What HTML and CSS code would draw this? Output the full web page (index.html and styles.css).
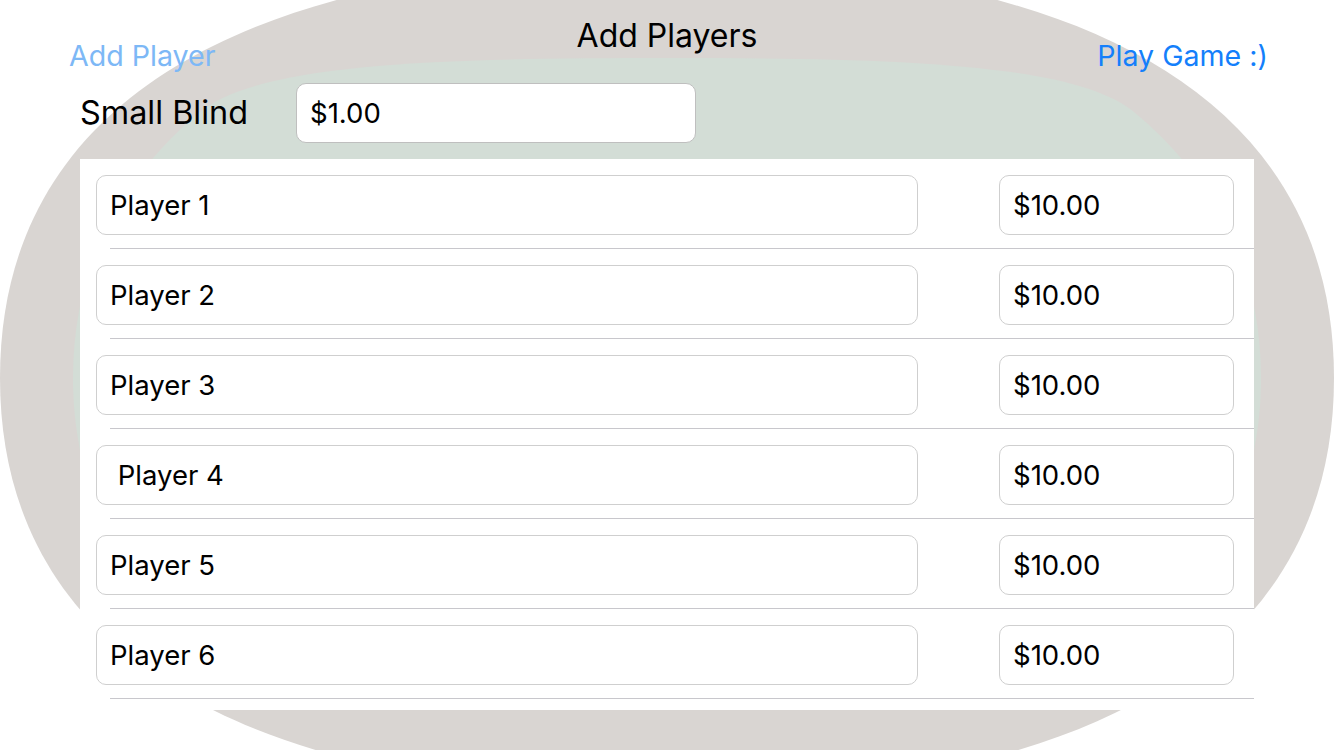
FILE: index.html
```html
<!DOCTYPE html>
<html lang="en">
<head>
<meta charset="utf-8">
<title>Add Players</title>
<link rel="stylesheet" href="styles.css">
</head>
<body>
<div class="screen">
  <svg class="table-bg" width="1334" height="750" viewBox="0 0 1334 750" aria-hidden="true">
    <path class="rail" d="M0,378 C0,78 287,-38 667,-38 C1047,-38 1334,78 1334,378 C1334,678 1047,794 667,794 C287,794 0,678 0,378 Z"/>
    <path class="felt" d="M73,378 C73,245 140,162 200,112 C260,62 450,58 667,58 C884,58 1074,62 1134,112 C1194,162 1261,245 1261,378 C1261,511 1194,594 1134,644 C1074,694 884,698 667,698 C450,698 260,694 200,644 C140,594 73,511 73,378 Z"/>
  </svg>

  <header class="topbar">
    <button class="nav-btn nav-add" type="button">Add Player</button>
    <h1 class="title">Add Players</h1>
    <button class="nav-btn nav-play" type="button">Play Game :)</button>
  </header>

  <div class="blind-row">
    <label class="blind-label" for="blind">Small Blind</label>
    <input id="blind" class="field blind-field" type="text" value="$1.00">
  </div>

  <div class="players">
    <div class="player-row">
      <input class="field name-field" type="text" value="Player 1">
      <input class="field amount-field" type="text" value="$10.00">
    </div>
    <div class="player-row">
      <input class="field name-field" type="text" value="Player 2">
      <input class="field amount-field" type="text" value="$10.00">
    </div>
    <div class="player-row">
      <input class="field name-field" type="text" value="Player 3">
      <input class="field amount-field" type="text" value="$10.00">
    </div>
    <div class="player-row">
      <input class="field name-field" type="text" value=" Player 4">
      <input class="field amount-field" type="text" value="$10.00">
    </div>
    <div class="player-row">
      <input class="field name-field" type="text" value="Player 5">
      <input class="field amount-field" type="text" value="$10.00">
    </div>
    <div class="player-row">
      <input class="field name-field" type="text" value="Player 6">
      <input class="field amount-field" type="text" value="$10.00">
    </div>
  </div>
</div>
</body>
</html>
```

FILE: styles.css
```css
* {
  box-sizing: border-box;
}

html, body {
  margin: 0;
  padding: 0;
  background: #ffffff;
}

body {
  font-family: Inter, "Noto Sans", "Liberation Sans", sans-serif;
  color: #000000;
}

.screen {
  position: relative;
  isolation: isolate;
  width: 1334px;
  height: 750px;
  overflow: hidden;
  background: #ffffff;
}

.table-bg {
  position: absolute;
  left: 0;
  top: 0;
  z-index: -1;
  display: block;
}

.rail {
  fill: #d9d5d2;
}

.felt {
  fill: #d3ddd6;
}

/* top bar */
.topbar {
  display: grid;
  grid-template-columns: 1fr auto 1fr;
  height: 83px;
}

.title {
  margin: 0;
  padding-top: 18px;
  font-size: 32px;
  line-height: 36px;
  font-weight: 400;
  text-align: center;
}

.nav-btn {
  align-self: start;
  margin: 38px 0 0 0;
  padding: 0;
  border: 0;
  background: none;
  font-family: inherit;
  font-size: 28.6px;
  line-height: 36px;
  font-weight: 400;
  cursor: pointer;
}

.nav-add {
  justify-self: start;
  margin-left: 69px;
  color: #7db8f6;
}

.nav-play {
  justify-self: end;
  margin-right: 66px;
  color: #147ffb;
}

/* small blind */
.blind-row {
  display: flex;
  align-items: center;
  height: 60px;
  padding-left: 80px;
}

.blind-label {
  width: 216px;
  font-size: 32.4px;
  line-height: 40px;
}

.field {
  display: block;
  margin: 0;
  height: 60px;
  padding: 0 0 0 13px;
  border: 1px solid #cfcfcf;
  border-radius: 10px;
  background: #ffffff;
  font-family: inherit;
  font-size: 27.5px;
  color: #000000;
  outline: none;
}

.blind-field {
  width: 400px;
  border-color: #bfbfbf;
}

/* players list */
.players {
  margin: 16px 0 0 80px;
  width: 1174px;
  height: 551px;
  background: #ffffff;
}

.player-row {
  display: flex;
  justify-content: space-between;
  align-items: flex-start;
  height: 90px;
  padding: 16px 20px 0 16px;
  background: linear-gradient(#c8c7cc, #c8c7cc) no-repeat 30px 100% / calc(100% - 30px) 1px;
}

.name-field {
  width: 822px;
}

.amount-field {
  width: 235px;
}
```
